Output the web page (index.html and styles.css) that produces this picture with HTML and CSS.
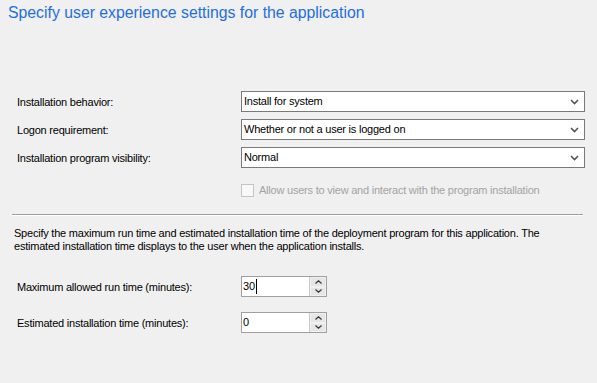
FILE: index.html
```html
<!DOCTYPE html>
<html>
<head>
<meta charset="utf-8">
<link rel="stylesheet" href="styles.css">
</head>
<body>
<div class="page">
  <h1 class="title">Specify user experience settings for the application</h1>
  <div class="form">
    <div class="row">
      <label class="label">Installation behavior:</label>
      <div class="combo"><span class="combo-text">Install for system</span><svg class="chev" width="9" height="6" viewBox="0 0 9 6"><path d="M1 1 L4.5 4.5 L8 1" fill="none" stroke="#555" stroke-width="1.6"/></svg></div>
    </div>
    <div class="row">
      <label class="label">Logon requirement:</label>
      <div class="combo"><span class="combo-text">Whether or not a user is logged on</span><svg class="chev" width="9" height="6" viewBox="0 0 9 6"><path d="M1 1 L4.5 4.5 L8 1" fill="none" stroke="#555" stroke-width="1.6"/></svg></div>
    </div>
    <div class="row">
      <label class="label">Installation program visibility:</label>
      <div class="combo"><span class="combo-text">Normal</span><svg class="chev" width="9" height="6" viewBox="0 0 9 6"><path d="M1 1 L4.5 4.5 L8 1" fill="none" stroke="#555" stroke-width="1.6"/></svg></div>
    </div>
    <div class="check-row">
      <span class="checkbox"></span>
      <span class="check-label">Allow users to view and interact with the program installation</span>
    </div>
  </div>
  <hr class="sep">
  <p class="desc">Specify the maximum run time and estimated installation time of the deployment program for this application. The estimated installation time displays to the user when the application installs.</p>
  <div class="spin-rows">
    <div class="row">
      <label class="label">Maximum allowed run time (minutes):</label>
      <div class="spin">
        <span class="spin-text">30<span class="caret"></span></span>
        <div class="spin-btns">
          <span class="spin-btn"><svg width="7" height="4" viewBox="0 0 7 4"><path d="M0.5 3.5 L3.5 0.8 L6.5 3.5" fill="none" stroke="#333" stroke-width="1.2"/></svg></span>
          <span class="spin-btn"><svg width="7" height="4" viewBox="0 0 7 4"><path d="M0.5 0.5 L3.5 3.2 L6.5 0.5" fill="none" stroke="#333" stroke-width="1.2"/></svg></span>
        </div>
      </div>
    </div>
    <div class="row">
      <label class="label">Estimated installation time (minutes):</label>
      <div class="spin">
        <span class="spin-text">0</span>
        <div class="spin-btns">
          <span class="spin-btn"><svg width="7" height="4" viewBox="0 0 7 4"><path d="M0.5 3.5 L3.5 0.8 L6.5 3.5" fill="none" stroke="#333" stroke-width="1.2"/></svg></span>
          <span class="spin-btn"><svg width="7" height="4" viewBox="0 0 7 4"><path d="M0.5 0.5 L3.5 3.2 L6.5 0.5" fill="none" stroke="#333" stroke-width="1.2"/></svg></span>
        </div>
      </div>
    </div>
  </div>
</div>
</body>
</html>
```

FILE: styles.css
```css
html, body {
  margin: 0;
  padding: 0;
  background: #f0f0f0;
}
.page {
  width: 597px;
  height: 383px;
  font-family: "Liberation Sans", Arial, sans-serif;
  font-size: 11px;
  letter-spacing: -0.22px;
  color: #000;
  overflow: hidden;
}
.title {
  margin: 0;
  padding: 3px 0 0 8px;
  font-size: 15.8px;
  font-weight: normal;
  letter-spacing: 0;
  color: #1f6ee0;
  line-height: 20px;
}
.form {
  padding: 68px 0 0 17px;
  display: flex;
  flex-direction: column;
  gap: 7px;
}
.row {
  display: flex;
  align-items: center;
  height: 21px;
}
.label {
  width: 224px;
  flex: none;
}
.combo {
  width: 340px;
  height: 19px;
  border: 1px solid #7a7a7a;
  background: #fff;
  display: flex;
  align-items: center;
  justify-content: space-between;
  padding: 0 0 0 2px;
  box-sizing: content-box;
}
.combo-text {
  line-height: 19px;
}
.chev {
  margin-right: 5px;
}
.check-row {
  display: flex;
  align-items: center;
  margin-top: 8px;
  padding-left: 224px;
  height: 14px;
}
.checkbox {
  width: 11px;
  height: 11px;
  border: 1px solid #c4c4c4;
  background: #f8f8f8;
  flex: none;
}
.check-label {
  margin-left: 5px;
  color: #a3a3a3;
}
.sep {
  margin: 17px 14px 0 12px;
  border: none;
  border-top: 1px solid #a0a0a0;
  border-bottom: 1px solid #fff;
  height: 0;
}
.desc {
  margin: 11px 0 0 14px;
  width: 560px;
  line-height: 13px;
}
.spin-rows {
  padding: 23px 0 0 17px;
  display: flex;
  flex-direction: column;
  gap: 15px;
}
.spin {
  width: 84px;
  height: 19px;
  border: 1px solid #a0a0a0;
  background: #fff;
  display: flex;
}
.spin-text {
  flex: 1;
  padding-left: 1px;
  line-height: 19px;
  display: flex;
  align-items: center;
}
.caret {
  display: inline-block;
  width: 1px;
  height: 15px;
  background: #000;
  margin-left: 1px;
}
.spin-btns {
  width: 16px;
  display: flex;
  flex-direction: column;
  border-left: 1px solid #c8c8c8;
}
.spin-btn {
  flex: 1;
  background: #e6e6e6;
  border: 1px solid #f0f0f0;
  display: flex;
  align-items: center;
  justify-content: center;
}
```
